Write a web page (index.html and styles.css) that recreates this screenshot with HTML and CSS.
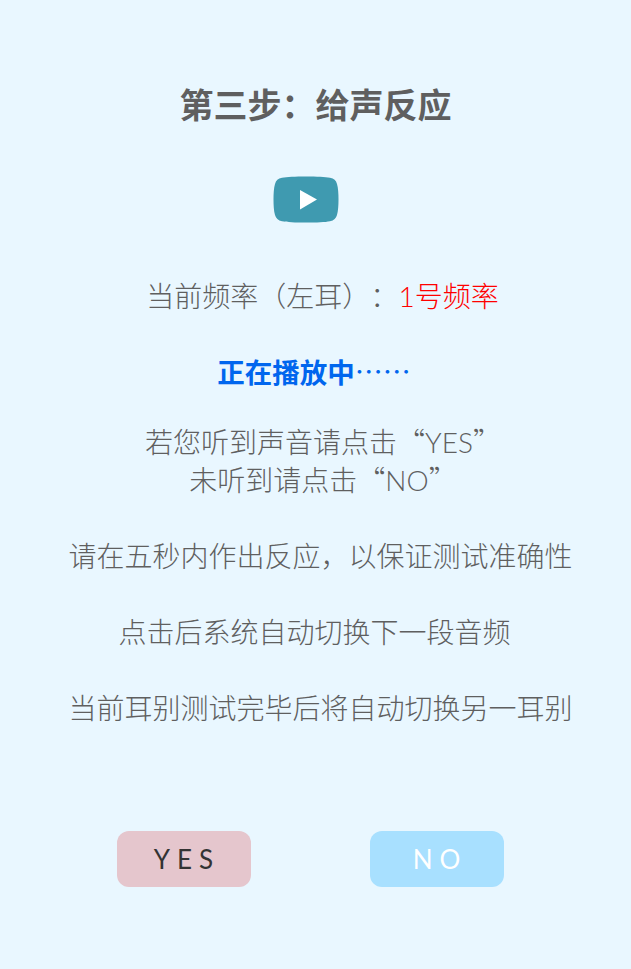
FILE: index.html
```html
<!DOCTYPE html>
<html lang="zh-CN">
<head>
    <meta charset="UTF-8">
    <meta name="viewport" content="width=device-width, initial-scale=1.0">
    <title>第三步：给声反应</title>
    <link rel="stylesheet" href="styles.css">
</head>
<body>
    <div class="page">
        <h1 class="title">第三步：给声反应</h1>

        <button class="playBtn" aria-label="播放">
            <svg width="66" height="47" viewBox="0 0 66 47">
                <path d="M33 0.5C44 0.5 52 0.8 57 1.8C61 2.6 63 4.5 64 8C65.2 12 65.5 18 65.5 23.5C65.5 29 65.2 35 64 39C63 42.500 61 44.400 57 45.200C52 46.200 44 46.500 33 46.500C22 46.500 14 46.200 9 45.200C5 44.400 3 42.500 2 39C0.800 35 0.500 29 0.500 23.500C0.500 18 0.800 12 2 8C3 4.500 5 2.600 9 1.800C14 0.800 22 0.500 33 0.500Z" fill="#3f9ab0"/>
                <path d="M27 14V33.500L44 23.500Z" fill="#ffffff"/>
            </svg>
        </button>

        <p class="freq">当前频率（左耳）：<span class="freqValue"><span class="latin">1</span>号频率</span></p>

        <p class="playing">正在播放中<span class="dots">……</span></p>

        <p class="tip tipFirst">若您听到声音请点击“<span class="latin">YES</span>”<br>未听到请点击“<span class="latin">NO</span>”</p>
        <p class="tip tipLong">请在五秒内作出反应，以保证测试准确性</p>
        <p class="tip tipShort">点击后系统自动切换下一段音频</p>
        <p class="tip tipLong">当前耳别测试完毕后将自动切换另一耳别</p>

        <div class="answers">
            <button class="answer yes">YES</button>
            <button class="answer no">NO</button>
        </div>
    </div>
</body>
</html>
```

FILE: styles.css
```css
body {
    margin: 0;
    background-color: #e9f7ff;
    font-family: "Noto Sans CJK SC", "Noto Sans", sans-serif;
    color: #5f5f5f;
    text-spacing-trim: space-all;
}

.page {
    display: flex;
    flex-direction: column;
    align-items: center;
    height: 969px;
    padding-top: 79px;
    box-sizing: border-box;
}

.latin {
    font-family: "Lato", sans-serif;
    line-height: 0;
}

.title {
    margin: 0;
    font-size: 34px;
    line-height: 50px;
    font-weight: 700;
}

.playBtn {
    display: block;
    margin: 47px 20px 0 0;
    padding: 0;
    border: none;
    background: none;
    height: 47px;
}

.freq {
    margin: 52px 0 0 14px;
    font-size: 28px;
    font-weight: 300;
    line-height: 40px;
}

.freqValue {
    color: #ff0000;
}

.playing {
    margin: 36px 3px 0 0;
    font-size: 27.500px;
    font-weight: 700;
    line-height: 40px;
    color: #0066ee;
}

.dots {
    font-size: 28px;
    font-weight: 400;
}

.tip {
    margin: 38px 0 0;
    font-size: 28px;
    font-weight: 300;
    line-height: 38px;
    text-align: center;
}

.tipFirst {
    margin: 31px 0 0 15px;
}

.tipLong {
    margin-left: 10px;
}

.tipShort {
    margin-right: 2px;
}

.answers {
    display: flex;
    justify-content: space-between;
    width: 387px;
    margin: 105px 10px 0 0;
}

.answer {
    width: 134px;
    height: 56px;
    padding: 0 0 0 6px;
    border: none;
    border-radius: 12px;
    font-family: "Lato", sans-serif;
    font-size: 26px;
    letter-spacing: 7px;
}

.yes {
    background-color: #e5c6cd;
    color: #333333;
}

.no {
    background-color: #a8e0ff;
    color: #ffffff;
}
```
